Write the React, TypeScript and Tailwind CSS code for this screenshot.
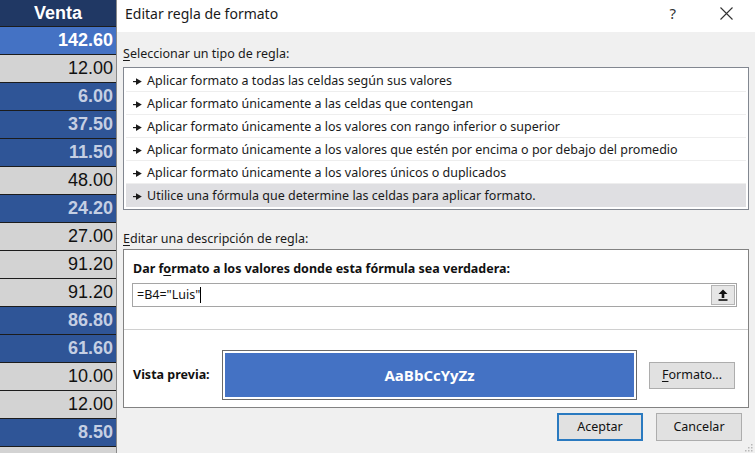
import React from "react";

type Row = { v: string; k: "sel" | "g" | "b" };

const rows: Row[] = [
  { v: "142.60", k: "sel" },
  { v: "12.00", k: "g" },
  { v: "6.00", k: "b" },
  { v: "37.50", k: "b" },
  { v: "11.50", k: "b" },
  { v: "48.00", k: "g" },
  { v: "24.20", k: "b" },
  { v: "27.00", k: "g" },
  { v: "91.20", k: "g" },
  { v: "91.20", k: "g" },
  { v: "86.80", k: "b" },
  { v: "61.60", k: "b" },
  { v: "10.00", k: "g" },
  { v: "12.00", k: "g" },
  { v: "8.50", k: "b" },
  { v: "", k: "g" },
];

const items = [
  "Aplicar formato a todas las celdas según sus valores",
  "Aplicar formato únicamente a las celdas que contengan",
  "Aplicar formato únicamente a los valores con rango inferior o superior",
  "Aplicar formato únicamente a los valores que estén por encima o por debajo del promedio",
  "Aplicar formato únicamente a los valores únicos o duplicados",
  "Utilice una fórmula que determine las celdas para aplicar formato.",
];

function Pointer() {
  return (
    <svg width="9" height="7" viewBox="0 0 9 7" className="shrink-0">
      <rect x="0" y="3" width="4" height="1.2" fill="#1a1a1a" />
      <polygon points="3,0.3 8.8,3.6 3,6.9" fill="#1a1a1a" />
    </svg>
  );
}

function Cell({ r }: { r: Row }) {
  const base =
    "h-[28px] shrink-0 flex items-center justify-end pr-[3px] border-b border-[#1c1c1c] text-[18px] font-['Liberation_Sans',Arial,sans-serif]";
  if (r.k === "sel")
    return <div className={base + " bg-[#4472c4] text-white font-bold"}>{r.v}</div>;
  if (r.k === "b")
    return <div className={base + " bg-[#2f5597] text-[#c5cfe3] font-bold"}>{r.v}</div>;
  return <div className={base + " bg-[#d3d3d3] text-[#111111]"}>{r.v}</div>;
}

export default function App() {
  return (
    <div className="w-[755px] h-[453px] overflow-hidden flex bg-white font-['Segoe_UI','Noto_Sans',sans-serif] text-[12.5px] text-[#1a1a1a]">
      {/* Spreadsheet column */}
      <div className="w-[116px] shrink-0 flex flex-col">
        <div className="h-[27px] shrink-0 bg-[#203864] text-white font-bold text-[18px] flex items-center justify-center border-b border-[#1c1c1c] font-['Liberation_Sans',Arial,sans-serif]">
          Venta
        </div>
        {rows.map((r, i) => (
          <Cell key={i} r={r} />
        ))}
      </div>

      {/* Dialog */}
      <div className="flex-1 flex flex-col border-l border-[#8a8a8a] bg-[#f0f0f0]">
        {/* Title bar */}
        <div className="h-[32px] shrink-0 bg-white flex items-center pl-[8px] pb-[5px]">
          <span className="text-[14px] text-[#1a1a1a]">Editar regla de formato</span>
          <span className="ml-auto mr-[44px] text-[15px] text-[#333]">?</span>
          <svg width="13" height="13" viewBox="0 0 13 13" className="mr-[22px]">
            <path d="M0.5 0.5 L12.5 12.5 M12.5 0.5 L0.5 12.5" stroke="#333" strokeWidth="1.1" />
          </svg>
        </div>

        <div className="flex-1 flex flex-col pl-[6px] pr-[6px]">
          <div className="mt-[14px] h-[16px] leading-[16px]">
            <span className="underline underline-offset-2">S</span>eleccionar un tipo de regla:
          </div>

          {/* List box */}
          <div className="mt-[5px] h-[143px] bg-white border border-[#828790] pt-[1px] px-[2px]">
            {items.map((t, i) => (
              <div
                key={i}
                className={
                  "h-[23px] flex items-center gap-[5px] pl-[7px] pt-[2px] whitespace-nowrap " +
                  (i === items.length - 1
                    ? "bg-[#dfdfe2]"
                    : "border-b border-[#eeeeee]")
                }
              >
                <Pointer />
                <span>{t}</span>
              </div>
            ))}
          </div>

          <div className="mt-[21px] h-[16px] leading-[16px]">
            <span className="underline underline-offset-2">E</span>ditar una descripción de regla:
          </div>

          {/* Description box */}
          <div className="mt-[2px] h-[159px] bg-white border border-[#828282] flex flex-col">
            <div className="pl-[9px] pt-[11px] h-[16px] box-content leading-[16px] font-bold text-[#111]">
              Dar f<span className="underline underline-offset-2">o</span>rmato a los valores donde esta fórmula sea verdadera:
            </div>
            <div className="ml-[8px] mr-[11px] mt-[6px] h-[24px] border border-[#a5a5a5] flex items-center">
              <span className="pl-[4px] text-[#111]">=B4="Luis"</span>
              <span className="w-[1px] h-[16px] bg-black" />
              <div className="ml-auto mr-[1px] w-[24px] h-[20px] bg-[#e6e6e6] border border-[#b5b5b5] flex items-center justify-center">
                <svg width="10" height="12" viewBox="0 0 10 12">
                  <polygon points="5,0.5 9.5,5 6.3,5 6.3,9 3.7,9 3.7,5 0.5,5" fill="#111" />
                  <rect x="0.5" y="10.2" width="9" height="1.6" fill="#111" />
                </svg>
              </div>
            </div>
            <div className="mt-[22px] h-[1px] bg-[#d0d0d0]" />
            <div className="flex items-center mt-[20px]">
              <div className="w-[98px] pl-[9px] font-bold text-[#111] whitespace-nowrap">Vista previa:</div>
              <div className="w-[415px] h-[50px] border border-[#6a6a6a] p-[2px] bg-white">
                <div className="w-full h-full bg-[#4472c4] flex items-center justify-center text-white font-bold text-[15px] font-['Open_Sans','Noto_Sans',sans-serif]">
                  AaBbCcYyZz
                </div>
              </div>
              <div className="ml-[12px] w-[86px] h-[27px] bg-[#e1e1e1] border border-[#adadad] flex items-center justify-center text-[#111]">
                <span>
                  <span className="underline underline-offset-2">F</span>ormato...
                </span>
              </div>
            </div>
          </div>

          {/* Buttons */}
          <div className="mt-[5px] flex justify-end gap-[13px] pr-[7px]">
            <div className="w-[86px] h-[28px] bg-[#e1e1e1] border-2 border-[#2a7ac0] flex items-center justify-center text-[#111]">
              Aceptar
            </div>
            <div className="w-[86px] h-[28px] bg-[#e1e1e1] border border-[#adadad] flex items-center justify-center text-[#111]">
              Cancelar
            </div>
          </div>
          <div className="flex justify-end mt-[1px] mr-[-4px]">
            <svg width="10" height="10" viewBox="0 0 10 10">
              <rect x="8" y="2" width="1.5" height="1.5" fill="#b8b8b8" />
              <rect x="5" y="5" width="1.5" height="1.5" fill="#b8b8b8" />
              <rect x="8" y="5" width="1.5" height="1.5" fill="#b8b8b8" />
              <rect x="2" y="8" width="1.5" height="1.5" fill="#b8b8b8" />
              <rect x="5" y="8" width="1.5" height="1.5" fill="#b8b8b8" />
              <rect x="8" y="8" width="1.5" height="1.5" fill="#b8b8b8" />
            </svg>
          </div>
        </div>
      </div>
    </div>
  );
}
